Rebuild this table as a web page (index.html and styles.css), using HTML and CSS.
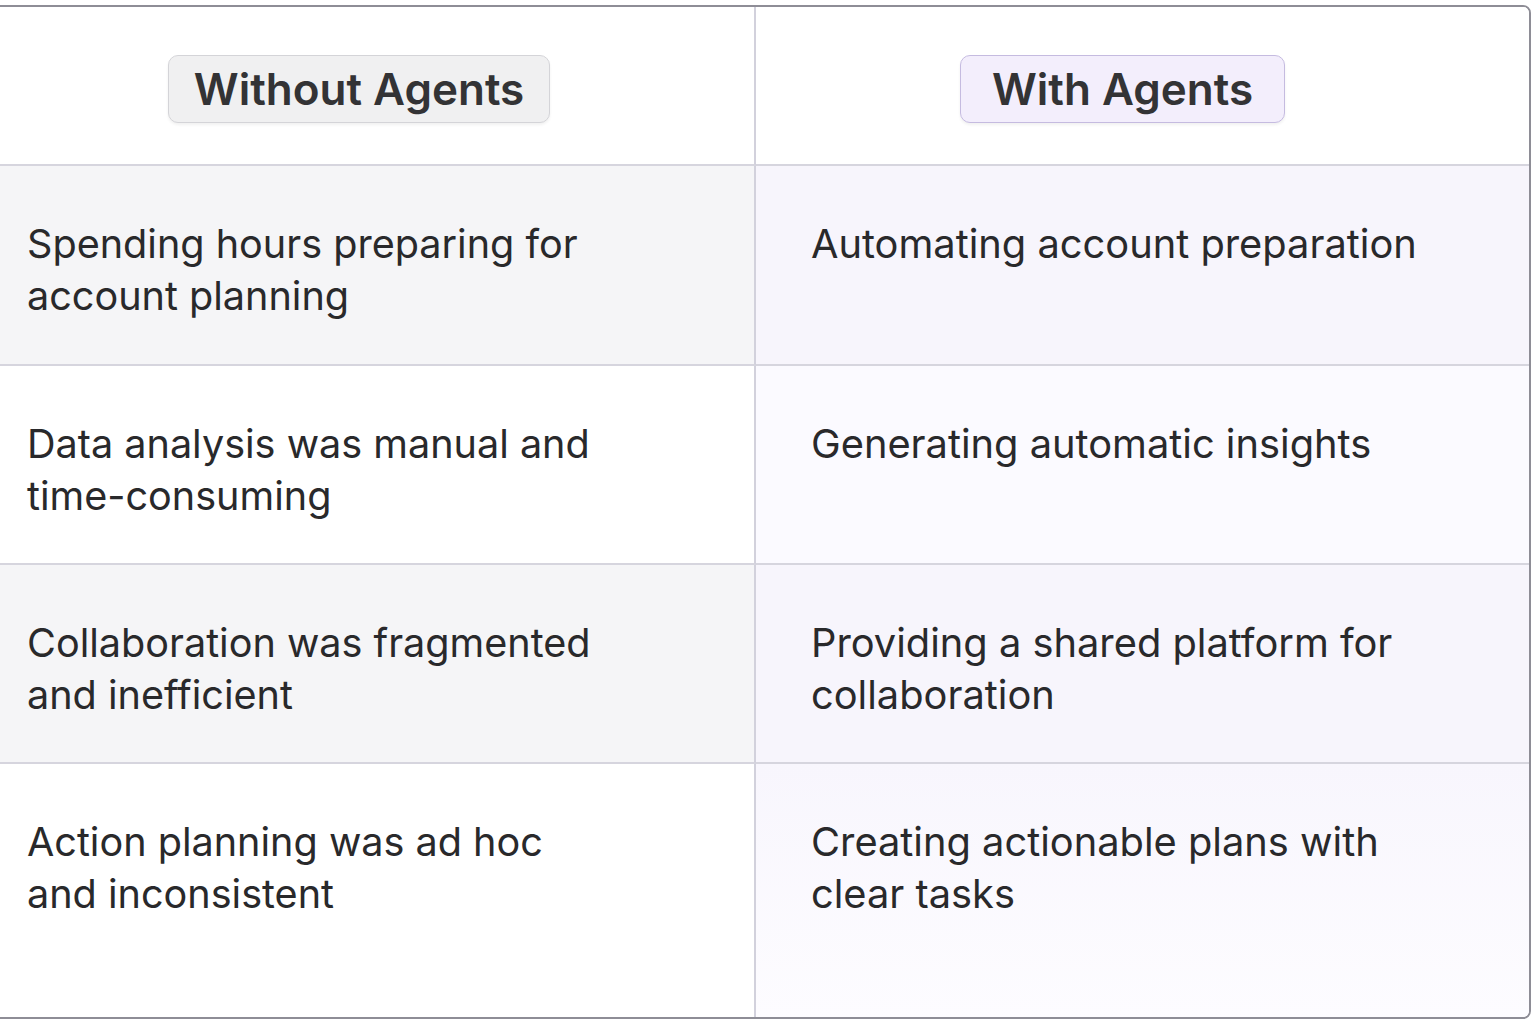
FILE: index.html
```html
<!DOCTYPE html>
<html lang="en">
<head>
<meta charset="utf-8">
<title>Without Agents vs With Agents</title>
<link rel="stylesheet" href="styles.css">
</head>
<body>
<div class="compare">
  <div class="cell head left"><span class="badge badge-grey">Without Agents</span></div>
  <div class="cell head right"><span class="badge badge-purple">With Agents</span></div>

  <div class="cell left shade"><p class="txt">Spending hours preparing for account planning</p></div>
  <div class="cell right shade"><p class="txt">Automating account preparation</p></div>

  <div class="cell left"><p class="txt">Data analysis was manual and time-consuming</p></div>
  <div class="cell right"><p class="txt">Generating automatic insights</p></div>

  <div class="cell left shade"><p class="txt">Collaboration was fragmented and inefficient</p></div>
  <div class="cell right shade"><p class="txt">Providing a shared platform for collaboration</p></div>

  <div class="cell left last"><p class="txt">Action planning was ad hoc and inconsistent</p></div>
  <div class="cell right last"><p class="txt">Creating actionable plans with clear tasks</p></div>
</div>
</body>
</html>
```

FILE: styles.css
```css
html, body {
  margin: 0;
  padding: 0;
  background: #ffffff;
  overflow: hidden;
}
body {
  font-family: Inter, "Noto Sans", "Liberation Sans", sans-serif;
  color: #29292b;
  padding-top: 5px;
}
.compare {
  margin-left: -28px;
  width: 1559px;
  height: 1014px;
  box-sizing: border-box;
  border: 2px solid #8e8d96;
  border-radius: 8px;
  overflow: hidden;
  display: grid;
  grid-template-columns: 782px 1fr;
  grid-template-rows: 159px 200px 199px 199px 1fr;
  background: #ffffff;
}
.cell {
  box-sizing: border-box;
  border-bottom: 2px solid #d6d5de;
}
.cell.left {
  border-right: 2px solid #d2d1dc;
  padding-left: 53px;
}
.cell.right {
  padding-left: 55px;
  background: #fbfaff;
}
.cell.last { border-bottom: none; }
.cell.left.shade { background: #f5f5f7; }
.cell.right.shade { background: #f7f5fc; }
.cell.right.last { background: linear-gradient(180deg, #f8f6fd 0%, #fdfcff 100%); }
.head {
  display: flex;
  align-items: center;
  justify-content: center;
  background: #ffffff;
  padding-top: 6px;
}
.cell.head.left { padding-left: 0; padding-right: 10px; }
.cell.head.right { padding-left: 0; padding-right: 40px; background: #ffffff; }
.badge {
  display: inline-block;
  font-weight: 600;
  font-size: 44px;
  line-height: 66px;
  padding: 0 25px;
  border-radius: 10px;
  color: #333335;
  box-shadow: 0 2px 3px rgba(0,0,0,0.06);
}
.badge-grey {
  background: #f0f0f1;
  border: 1.5px solid #d4d4d8;
}
.badge-purple {
  padding: 0 31px;
  background: #f3eefc;
  border: 1.5px solid #c5bbe0;
}
.txt {
  margin: 0;
  padding-top: 52px;
  font-size: 39.6px;
  line-height: 52px;
  font-weight: 400;
}
.left .txt { max-width: 575px; }
.right .txt { max-width: 630px; font-size: 39.8px; }
```
